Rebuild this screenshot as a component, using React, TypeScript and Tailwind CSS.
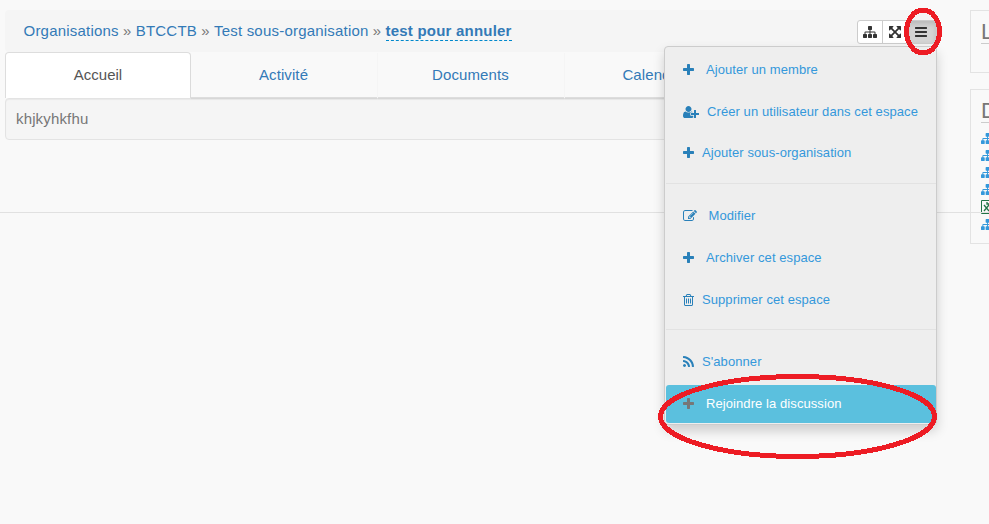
import React from "react";

type IconProps = { box: string; w: number; h: number; d: string; className?: string };

function Icon({ box, w, h, d, className = "" }: IconProps) {
  return (
    <svg viewBox={box} width={w} height={h} fill="currentColor" className={`shrink-0 ${className}`}>
      <path d={d} />
    </svg>
  );
}

const PLUS = "M1600 736v192q0 40-28 68t-68 28h-416v416q0 40-28 68t-68 28h-192q-40 0-68-28t-28-68v-416h-416q-40 0-68-28t-28-68v-192q0-40 28-68t68-28h416v-416q0-40 28-68t68-28h192q40 0 68 28t28 68v416h416q40 0 68 28t28 68z";
const BARS = "M1664 1344v128q0 26-19 45t-45 19h-1408q-26 0-45-19t-19-45v-128q0-26 19-45t45-19h1408q26 0 45 19t19 45zm0-512v128q0 26-19 45t-45 19h-1408q-26 0-45-19t-19-45v-128q0-26 19-45t45-19h1408q26 0 45 19t19 45zm0-512v128q0 26-19 45t-45 19h-1408q-26 0-45-19t-19-45v-128q0-26 19-45t45-19h1408q26 0 45 19t19 45z";
const SITEMAP = "M1792 1248v320q0 40-28 68t-68 28h-320q-40 0-68-28t-28-68v-320q0-40 28-68t68-28h96v-192h-512v192h96q40 0 68 28t28 68v320q0 40-28 68t-68 28h-320q-40 0-68-28t-28-68v-320q0-40 28-68t68-28h96v-192h-512v192h96q40 0 68 28t28 68v320q0 40-28 68t-68 28h-320q-40 0-68-28t-28-68v-320q0-40 28-68t68-28h96v-192q0-52 38-90t90-38h512v-192h-96q-40 0-68-28t-28-68v-320q0-40 28-68t68-28h320q40 0 68 28t28 68v320q0 40-28 68t-68 28h-96v192h512q52 0 90 38t38 90v192h96q40 0 68 28t28 68z";
const ARROWS = "M1411 541l-355 355 355 355 144-144q29-31 70-14 39 17 39 59v448q0 26-19 45t-45 19h-448q-42 0-59-40-17-39 14-69l144-144-355-355-355 355 144 144q31 30 14 69-17 40-59 40h-448q-26 0-45-19t-19-45v-448q0-42 40-59 39-17 69 14l144 144 355-355-355-355-144 144q-19 19-45 19-12 0-24-5-40-17-40-59v-448q0-26 19-45t45-19h448q42 0 59 40 17 39-14 69l-144 144 355 355 355-355-144-144q-31-30-14-69 17-40 59-40h448q26 0 45 19t19 45v448q0 42-39 59-13 5-25 5-26 0-45-19z";
const RSS = "M576 1344q0 80-56 136t-136 56-136-56-56-136 56-136 136-56 136 56 56 136zm512 123q2 28-17 48-18 21-47 21h-135q-25 0-43-16.5t-20-41.5q-22-229-184.5-391.5t-391.5-184.5q-25-2-41.5-20t-16.5-43v-135q0-29 21-47 17-17 43-17h5q160 13 306 80.5t259 181.5q114 113 181.5 259t80.5 306zm512 2q2 27-18 47-18 20-46 20h-143q-26 0-44.5-17.5t-19.5-42.5q-12-215-101-408.5t-231.5-336-336-231.5-408.5-102q-25-1-42.5-19.5t-17.5-43.5v-143q0-28 20-46 18-18 44-18h3q262 13 501.5 120t425.5 294q187 186 294 425.5t120 501.5z";
const TRASH = "M704 736v576q0 14-9 23t-23 9h-64q-14 0-23-9t-9-23v-576q0-14 9-23t23-9h64q14 0 23 9t9 23zm256 0v576q0 14-9 23t-23 9h-64q-14 0-23-9t-9-23v-576q0-14 9-23t23-9h64q14 0 23 9t9 23zm256 0v576q0 14-9 23t-23 9h-64q-14 0-23-9t-9-23v-576q0-14 9-23t23-9h64q14 0 23 9t9 23zm128 724v-948h-896v948q0 22 7 40.5t14.5 27 10.5 8.5h832q3 0 10.5-8.5t14.5-27 7-40.5zm-672-1076h448l-48-117q-7-9-17-11h-317q-10 2-17 11zm928 32v64q0 14-9 23t-23 9h-96v948q0 83-47 143.5t-113 60.5h-832q-66 0-113-58.5t-47-141.5v-952h-96q-14 0-23-9t-9-23v-64q0-14 9-23t23-9h309l70-167q15-37 54-63t79-26h320q40 0 79 26t54 63l70 167h309q14 0 23 9t9 23z";
const EDIT = "M888 1184l116-116-152-152-116 116v56h96v96h56zm440-720q-16-16-33 1l-350 350q-17 17-1 33t33-1l350-350q17-17 1-33zm80 594v190q0 119-84.5 203.5t-203.5 84.5h-832q-119 0-203.5-84.5t-84.5-203.5v-832q0-119 84.5-203.5t203.5-84.5h832q63 0 117 25 15 7 18 23 3 17-9 29l-49 49q-14 14-32 8-23-6-45-6h-832q-66 0-113 47t-47 113v832q0 66 47 113t113 47h832q66 0 113-47t47-113v-126q0-13 9-22l64-64q15-15 35-7t20 29zm-96-738l288 288-672 672h-288v-288zm444 132l-92 92-288-288 92-92q28-28 68-28t68 28l152 152q28 28 28 68t-28 68z";
const USER_PLUS = "M704 896q-159 0-271.5-112.5t-112.5-271.5 112.5-271.5 271.5-112.5 271.5 112.5 112.5 271.5-112.5 271.5-271.5 112.5zm960 128h352q13 0 22.5 9.5t9.5 22.5v192q0 13-9.5 22.5t-22.5 9.5h-352v352q0 13-9.5 22.5t-22.5 9.5h-192q-13 0-22.5-9.5t-9.5-22.5v-352h-352q-13 0-22.5-9.5t-9.5-22.5v-192q0-13 9.5-22.5t22.5-9.5h352v-352q0-13 9.5-22.5t22.5-9.5h192q13 0 22.5 9.5t9.5 22.5v352zm-736 224q0 52 38 90t90 38h256v238q-68 50-171 50h-874q-121 0-194-69t-73-190q0-53 3.5-103.5t14-109 26.5-108.5 43-97.5 62-81 85.5-53.5 111.5-20q19 0 39 17 79 61 154.5 91.5t164.5 30.5 164.5-30.5 154.5-91.5q20-17 39-17 132 0 217 96h-223q-52 0-90 38t-38 90v192z";

const plus = <Icon box="192 0 1408 1792" w={11} h={14} d={PLUS} />;

function MenuRow({ icon, label, gap, className = "h-[42px]" }: { icon: React.ReactNode; label: string; gap: string; className?: string }) {
  return (
    <a className={`flex items-center pl-[17px] text-[13px] leading-[18px] tracking-[0.08px] ${className}`}>
      <span className="flex w-[15px] shrink-0">{icon}</span>
      <span className={`whitespace-nowrap ${gap}`}>{label}</span>
    </a>
  );
}

function Menu() {
  return (
    <div className="absolute left-[664px] top-[46px] flex h-[379px] w-[273px] flex-col rounded border border-[#cccccc] bg-[#eeeeee] pl-px pt-[2px] text-[#2980b9] shadow-[0_6px_12px_rgba(0,0,0,0.175)] [&_a>span:last-child]:text-[#3498db]">
      <MenuRow icon={plus} label="Ajouter un membre" gap="ml-[8px]" />
      <MenuRow icon={<Icon box="0 0 2048 1792" w={16} h={14} d={USER_PLUS} />} label="Créer un utilisateur dans cet espace" gap="ml-[9px]" />
      <MenuRow icon={plus} label="Ajouter sous-organisation" gap="ml-[4px]" className="h-[40px]" />
      <div className="mb-[11px] mt-[10px] h-px shrink-0 bg-[#e2e2e2]" />
      <MenuRow icon={<Icon box="0 0 1792 1792" w={14} h={14} d={EDIT} />} label="Modifier" gap="ml-[10.5px]" />
      <MenuRow icon={plus} label="Archiver cet espace" gap="ml-[8px]" />
      <MenuRow icon={<Icon box="192 0 1408 1792" w={11} h={14} d={TRASH} />} label="Supprimer cet espace" gap="ml-[4px]" />
      <div className="mb-[11px] mt-[8px] h-px shrink-0 bg-[#e2e2e2]" />
      <MenuRow icon={<Icon box="192 0 1408 1792" w={11} h={14} d={RSS} />} label="S'abonner" gap="ml-[4px]" />
      <MenuRow
        icon={plus}
        label="Rejoindre la discussion"
        gap="ml-[8px]"
        className="mt-[2px] h-[38px] rounded-[3px] bg-[#5bc0de] text-[#777777] [&>span:last-child]:!text-white"
      />
    </div>
  );
}

function Breadcrumb() {
  return (
    <div className="flex h-[42px] items-center justify-between rounded bg-[#f5f5f5] pl-[18.5px]">
      <div className="flex gap-[4.2px] whitespace-nowrap text-[15px] leading-[18px] tracking-[0.21px] text-[#337ab7]">
        <a>Organisations</a>
        <span className="text-[#777777]">»</span>
        <a>BTCCTB</a>
        <span className="text-[#777777]">»</span>
        <a>Test sous-organisation</a>
        <span className="text-[#777777]">»</span>
        <a className="h-[19px] border-b border-dashed border-[#0088cc] font-bold">test pour annuler</a>
      </div>
      <div className="mt-[2px] flex h-[24px] w-[80px] overflow-hidden rounded-[3px] border border-[#cccccc] bg-white text-[#333333]">
        <span className="flex w-[25px] items-center justify-center border-r border-[#cccccc]">
          <Icon box="0 0 1792 1792" w={14} h={14} d={SITEMAP} />
        </span>
        <span className="flex w-[24px] items-center justify-center border-r border-[#cccccc]">
          <Icon box="0 0 1792 1792" w={14} h={14} d={ARROWS} />
        </span>
        <span className="flex flex-1 items-center bg-[#d4d4d4] pl-[7px] shadow-[inset_0_3px_5px_rgba(0,0,0,0.125)]">
          <Icon box="0 0 1792 1792" w={14} h={14} d={BARS} />
        </span>
      </div>
    </div>
  );
}

function Tabs() {
  return (
    <div className="flex h-[46px] text-center text-[15px] leading-[45px] text-[#337ab7]">
      <a className="w-[186px] rounded-t border border-b-0 border-[#dddddd] bg-white leading-[43px] text-[#555555]">Accueil</a>
      {["Activité", "Documents", "Calendrier", "Membres"].map((t) => (
        <a key={t} className="mr-px h-[46px] w-[186px] border-b border-[#dddddd] pr-px tracking-[0.1px] shadow-[0_1px_1px_rgba(0,0,0,0.05)] last:w-[184px]">{t}</a>
      ))}
    </div>
  );
}

function Sidebar() {
  return (
    <aside className="ml-[33px] flex w-[19px] shrink-0 flex-col gap-[16px] overflow-hidden text-[22px] leading-[26px] text-[#777777]">
      <section className="h-[63px] w-[40px] border border-[#e3e3e3] pl-[10px] pt-[8px]">
        <h2 className="h-[25px] border-b border-[#cccccc]">L</h2>
      </section>
      <section className="h-[155px] w-[40px] border border-[#e3e3e3] pl-[10px] pt-[8px]">
        <h2 className="h-[25px] border-b border-[#cccccc]">D</h2>
        <ul className="mt-[7px] flex flex-col text-[#3498db]">
          {[0, 1, 2, 3].map((i) => (
            <li key={i} className="flex h-[17px] items-center"><Icon box="0 0 1792 1792" w={13} h={13} d={SITEMAP} /></li>
          ))}
          <li className="flex h-[18px] items-center">
            <svg width="14" height="14" viewBox="0 0 14 14" fill="none" stroke="#217346">
              <path d="M.5.5h10v13H.5z" />
              <path d="M3 5l5 6M8 5l-5 6M6 2v2h4" strokeWidth="1.3" />
            </svg>
          </li>
          <li className="flex h-[17px] items-center"><Icon box="0 0 1792 1792" w={13} h={13} d={SITEMAP} /></li>
        </ul>
      </section>
    </aside>
  );
}

export default function App() {
  return (
    <div className="relative h-[524px] w-[989px] overflow-hidden bg-[#f9f9f9] font-['Liberation_Sans',Arial,sans-serif]">
      <div className="absolute left-0 top-[212px] h-px w-full bg-[#e1e1e1]" />
      <div className="flex pl-[5px] pt-[10px]">
        <main className="w-[932px] shrink-0">
          <Breadcrumb />
          <Tabs />
          <div className="h-[42px] rounded border border-[#e3e3e3] bg-[#f5f5f5] pl-[10px] text-[15px] leading-[40px] tracking-[0.15px] text-[#777777] shadow-[inset_0_1px_1px_rgba(0,0,0,0.05)]">
            khjkyhkfhu
          </div>
        </main>
        <Sidebar />
      </div>
      <Menu />
      {/* Red highlight rings over the menu button and the last entry */}
      <svg className="absolute left-0 top-0" width="989" height="524" fill="none" stroke="#ed1c24" shapeRendering="crispEdges">
        <ellipse cx="923" cy="31.5" rx="16.5" ry="21.5" strokeWidth="5" />
        <ellipse cx="797.5" cy="416.5" rx="137" ry="40" strokeWidth="5" />
      </svg>
    </div>
  );
}
